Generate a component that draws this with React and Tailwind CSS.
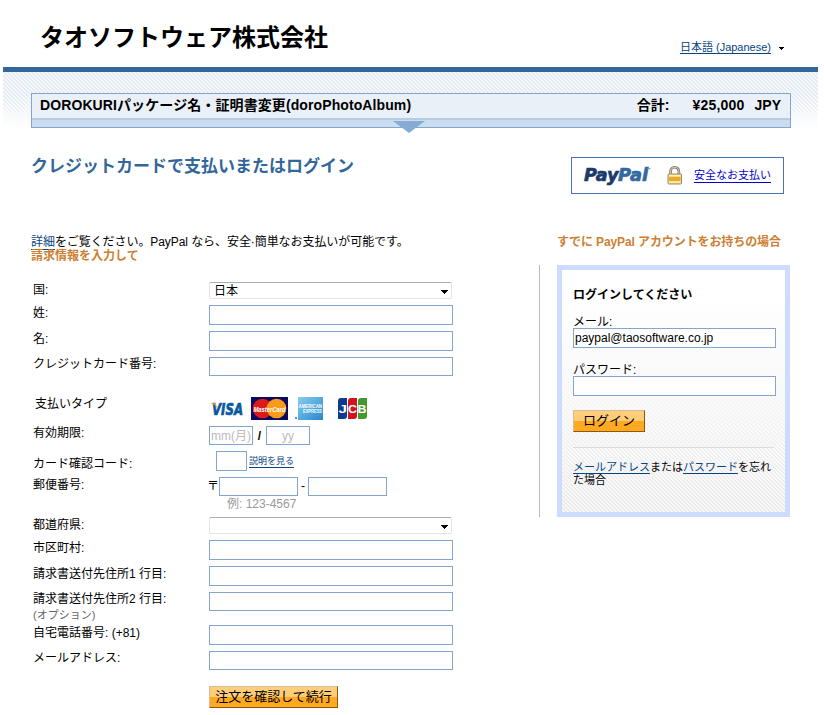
import React, { useState } from 'react';

const Field = ({ className = '', ...props }) => (
  <input
    className={`block border border-[#84a6cc] bg-white text-xs text-black outline-none ${className}`}
    {...props}
  />
);

const SelectBox = ({ value }) => (
  <button
    type="button"
    className="flex h-[17px] w-[243px] items-center justify-between rounded-xs border border-[#e3e3e6] border-t-[#ababab] bg-white pl-1 pr-[3px] text-xs leading-[15px]"
  >
    <span className="mt-px">{value}</span>
    <svg width="7" height="4" viewBox="0 0 7 4" className="mt-[3px]">
      <path d="M0 0h7v1H6v1H5v1H4v1H3V3H2V2H1V1H0z" fill="#000" />
    </svg>
  </button>
);

const Row = ({ label, note, className = '', labelClass = '', children }) => (
  <div className={`flex items-start ${className}`}>
    <div className={`w-[176px] shrink-0 leading-4 ${labelClass}`}>
      {label}
      {note && <div className="text-[11px] leading-4 text-[#666]">{note}</div>}
    </div>
    {children}
  </div>
);

const OrangeButton = ({ className = '', children }) => (
  <button
    type="button"
    className={`border border-[#d5bd98] border-b-[#915608] border-r-[#915608] bg-[linear-gradient(#ffcf7b_0,#ffcb78_50%,#ffa822_50%,#ffa822_100%)] text-[13px] leading-5 text-black ${className}`}
  >
    {children}
  </button>
);

const Lock = () => (
  <svg width="16" height="19" viewBox="0 0 16 19" className="block shrink-0">
    <path d="M3.5 9V5.5a4.2 4.2 0 0 1 8.4 0V9" fill="none" stroke="#77746a" strokeWidth="2.6" />
    <path d="M3.5 9V5.5a4.2 4.2 0 0 1 8.4 0V9" fill="none" stroke="#ddd9c8" strokeWidth="1" />
    <rect x="1" y="8" width="13.5" height="10" rx="1" fill="#f8dc85" stroke="#9d8b60" />
    <rect x="2" y="11" width="11.5" height="4" fill="#eba92c" />
    <path d="M2 9.5h11.5M2 16h11.5" stroke="#fff3c4" />
  </svg>
);

const PayPalLogo = () => (
  <svg width="68" height="24" viewBox="0 0 68 24" className="shrink-0 overflow-visible">
    <g fontFamily="'DejaVu Sans', sans-serif" fontStyle="italic" fontWeight="700" fontSize="18" strokeWidth="0.7">
      <text x="0" y="17" fill="#1b3a69" stroke="#1b3a69" textLength="34.5" lengthAdjust="spacingAndGlyphs">Pay</text>
      <text x="34" y="17" fill="#34699f" stroke="#34699f" textLength="30" lengthAdjust="spacingAndGlyphs">Pal</text>
    </g>
    <path d="M63.5 4.5h3" stroke="#7d9cc0" />
  </svg>
);

const Visa = () => (
  <svg width="36" height="24" viewBox="0 0 36 24" className="overflow-visible">
    <text x="3" y="17.5" fontFamily="'DejaVu Sans', sans-serif" fontStyle="italic" fontWeight="700" fontSize="15" fill="#0a57a0" stroke="#0a57a0" strokeWidth="0.7" textLength="31" lengthAdjust="spacingAndGlyphs">VISA</text>
    <path d="M1.2 6.3h5.4l2 5.5-2.8-3.8z" fill="#f2a62c" />
  </svg>
);

const MasterCard = () => (
  <svg width="37" height="23" viewBox="0 0 37 23">
    <rect width="37" height="23" fill="#0a0a5e" />
    <circle cx="11.5" cy="11.5" r="9.8" fill="#dc1a1c" />
    <circle cx="25.5" cy="11.5" r="9.8" fill="#f99c1c" />
    <text x="2.5" y="14.5" fontFamily="'Liberation Sans', sans-serif" fontStyle="italic" fontWeight="700" fontSize="8" fill="#fff" textLength="32" lengthAdjust="spacingAndGlyphs">MasterCard</text>
  </svg>
);

const Amex = () => (
  <svg width="28" height="23" viewBox="0 0 28 23" className="overflow-visible">
    <defs>
      <linearGradient id="amex" x1="0" y1="0" x2="1" y2="1">
        <stop offset="0" stopColor="#8acbf0" />
        <stop offset="0.5" stopColor="#55acdf" />
        <stop offset="1" stopColor="#2b86c8" />
      </linearGradient>
    </defs>
    <rect x="3" width="25" height="23" fill="url(#amex)" />
    <rect y="20" width="2" height="2" fill="#3fa0dc" />
    <g fontFamily="'Liberation Sans', sans-serif" fontWeight="700" fontSize="6" fill="#fff">
      <text x="3.5" y="11" textLength="23.5" lengthAdjust="spacingAndGlyphs">AMERICAN</text>
      <text x="8" y="16" textLength="19" lengthAdjust="spacingAndGlyphs">EXPRESS</text>
    </g>
  </svg>
);

const Jcb = () => (
  <svg width="29" height="21" viewBox="0 0 29 21">
    <path d="M3 0h6v18q0 3-3 3H0V3q0-3 3-3z" fill="#0c3a8c" />
    <path d="M13 0h6v18q0 3-3 3h-6V3q0-3 3-3z" fill="#cf1520" />
    <path d="M23 0h6v18q0 3-3 3h-6V3q0-3 3-3z" fill="#45982a" />
    <g fontFamily="'Liberation Sans', sans-serif" fontWeight="700" fontSize="10.5" fill="#fff">
      <text x="0.5" y="14.5" textLength="8.5" lengthAdjust="spacingAndGlyphs">J</text>
      <text x="10" y="14.5" textLength="9" lengthAdjust="spacingAndGlyphs">C</text>
      <text x="19.5" y="14.5" textLength="9" lengthAdjust="spacingAndGlyphs">B</text>
    </g>
  </svg>
);

const LoginPanel = () => {
  const [email, setEmail] = useState('paypal@taosoftware.co.jp');

  return (
    <div className="h-[252px] w-[233px] border-5 border-[#ccdcff] bg-[linear-gradient(#fff_10%,#ffffff00_100%),repeating-linear-gradient(45deg,#ebebeb_0,#ebebeb_1.41px,#f8f8f8_1.41px,#f8f8f8_2.828px)] px-[11px] pt-[17px]">
      <h3 className="font-bold leading-4">ログインしてください</h3>
      <div className="mt-[11px] leading-4">メール:</div>
      <Field
        className="-mt-[2px] h-5 w-[203px] px-[1px]"
        value={email}
        onChange={(e) => setEmail(e.target.value)}
      />
      <div className="mt-[14px] leading-4">パスワード:</div>
      <Field type="password" className="-mt-[2px] h-5 w-[203px]" />
      <OrangeButton className="mt-[14px] block h-[22px] w-[72px]">ログイン</OrangeButton>
      <hr className="mt-[15px] w-[201px] border-[#ddd]" />
      <p className="mt-[13px] w-[201px] text-[11px] leading-[13px]">
        <a href="#" className="border-b border-[#084482] text-[#084482]">メールアドレス</a>
        または
        <a href="#" className="border-b border-[#084482] text-[#084482]">パスワード</a>
        を忘れた場合
      </p>
    </div>
  );
};

const BillingForm = () => (
  <form className="w-[508px] pl-[2px] pt-[18px]" onSubmit={(e) => e.preventDefault()}>
    <Row label="国:" className="h-[23px]">
      <SelectBox value="日本" />
    </Row>
    <Row label="姓:" className="h-[26px]">
      <Field className="h-5 w-[244px]" />
    </Row>
    <Row label="名:" className="h-[26px]">
      <Field className="h-5 w-[244px]" />
    </Row>
    <Row label="クレジットカード番号:" className="h-10" labelClass="-mt-px">
      <Field className="h-[19px] w-[244px]" />
    </Row>
    <Row label="支払いタイプ" className="h-[29px]" labelClass="pl-[2px] -mt-px">
      <div className="flex items-start">
        <Visa />
        <div className="ml-[6px]"><MasterCard /></div>
        <div className="ml-[7px]"><Amex /></div>
        <div className="ml-[15px] mt-px"><Jcb /></div>
      </div>
    </Row>
    <Row label="有効期限:" className="h-[25px]" labelClass="-mt-px">
      <div className="flex items-center">
        <Field placeholder="mm(月)" className="h-[19px] w-11 pl-px placeholder:text-[#bbb]" />
        <span className="w-[13px] text-center font-bold">/</span>
        <Field placeholder="yy" className="h-[19px] w-11 text-center placeholder:text-[#bbb]" />
      </div>
    </Row>
    <Row label="カード確認コード:" className="h-[26px]" labelClass="mt-[5px]">
      <div className="flex items-start pl-[7px]">
        <Field className="h-5 w-[31px]" />
        <a href="#" className="ml-[2px] mt-[5px] border-b border-[#084482] text-[9px] leading-[11px] text-[#084482]">説明を見る</a>
      </div>
    </Row>
    <Row label="郵便番号:" className="h-10">
      <div>
        <div className="flex items-center">
          <span className="-ml-[2px] w-3 text-xs leading-[19px]">〒</span>
          <Field className="h-[19px] w-[79px]" />
          <span className="w-[10px] text-center leading-[19px]">-</span>
          <Field className="h-[19px] w-[79px]" />
        </div>
        <div className="pl-[18px] leading-4 text-[#999]">例: 123-4567</div>
      </div>
    </Row>
    <Row label="都道府県:" className="h-[23px]">
      <SelectBox />
    </Row>
    <Row label="市区町村:" className="h-[26px]">
      <Field className="h-5 w-[244px]" />
    </Row>
    <Row label="請求書送付先住所1 行目:" className="h-[26px]">
      <Field className="h-5 w-[244px]" />
    </Row>
    <Row label="請求書送付先住所2 行目:" note="(オプション)" className="h-[33px]" labelClass="-mt-px">
      <Field className="h-[19px] w-[244px]" />
    </Row>
    <Row label="自宅電話番号: (+81)" className="h-[26px]">
      <Field className="h-5 w-[244px]" />
    </Row>
    <Row label="メールアドレス:" className="h-[35px]" labelClass="-mt-px">
      <Field className="h-[19px] w-[244px]" />
    </Row>
    <OrangeButton className="ml-[176px] block h-[22px] w-[129px]">注文を確認して続行</OrangeButton>
  </form>
);

const App = () => (
  <div className="h-[715px] w-[824px] overflow-hidden bg-white pl-[3px] font-['Liberation_Sans','Noto_Sans_CJK_JP',sans-serif] text-xs text-black">
    <header className="flex h-[67px] w-[815px] justify-between pl-[37px] pr-[34px]">
      <h1 className="mt-5 text-2xl font-bold leading-9">タオソフトウェア株式会社</h1>
      <div className="mt-[41px] flex items-start text-[11px] leading-3">
        <a href="#" className="border-b border-[#084482] text-[#084482]">日本語 (Japanese)</a>
        <svg width="5" height="3" viewBox="0 0 5 3" className="ml-2 mt-[6px]">
          <path d="M0 0h5v1H4v1H3v1H2V2H1V1H0z" />
        </svg>
      </div>
    </header>

    <div className="h-[61px] w-[815px] border-t-5 border-[#336699] bg-[linear-gradient(#ffffff00_0,#ffffff00_40%,#fff_100%),repeating-linear-gradient(45deg,#e3eaf2_0,#e3eaf2_1.41px,#f6f9fc_1.41px,#f6f9fc_2.828px)] pl-7 pt-[21px]">
      <div className="relative h-[35px] w-[760px] border border-[#84a6cc] bg-[#cbdcee]">
        <div className="flex h-[26px] items-start border-b-2 border-[#b4cde5] bg-[#eaf0f8] pl-2 pr-[9px] text-sm font-bold leading-[23px]">
          <span className="tracking-[0.1px]">DOROKURIパッケージ名・証明書変更(doroPhotoAlbum)</span>
          <span className="ml-auto">合計:</span>
          <span className="ml-[23px] tracking-[0.2px]">¥25,000</span>
          <span className="ml-[10px]">JPY</span>
        </div>
        <svg width="32" height="12" viewBox="0 0 32 12" className="absolute left-[361px] top-[27px]">
          <path d="M0 0h32L16 12z" fill="#86abd4" />
        </svg>
      </div>
    </div>

    <main className="pl-7">
      <div className="flex h-[107px] w-[753px] items-start justify-between">
        <h2 className="mt-[27px] text-[17px] font-bold leading-6 text-[#336699]">クレジットカードで支払いまたはログイン</h2>
        <div className="mt-[29px] flex h-[37px] w-[213px] items-center border border-[#4a74ae] pl-3">
          <PayPalLogo />
          <div className="ml-[15px]"><Lock /></div>
          <a href="#" className="ml-[11px] border-b border-[#0000cc] text-[11px] leading-[13px] text-[#0000cc]">安全なお支払い</a>
        </div>
      </div>

      <div className="flex items-start">
        <div>
          <p className="h-[14px] leading-[15px] tracking-[-0.07px]">
            <a href="#" className="border-b border-[#084482] text-[#084482]">詳細</a>
            をご覧ください。PayPal なら、安全·簡単なお支払いが可能です。
          </p>
          <h3 className="font-bold leading-[15px] text-[#cc7f32]">請求情報を入力して</h3>
          <BillingForm />
        </div>
        <div className="mt-[30px] h-[252px] w-[18px] border-l border-[#bbb]" />
        <div>
          <h3 className="h-[30px] font-bold leading-[15px] tracking-[-0.1px] text-[#cc7f32]">すでに PayPal アカウントをお持ちの場合</h3>
          <LoginPanel />
        </div>
      </div>
    </main>
  </div>
);

export default App;
